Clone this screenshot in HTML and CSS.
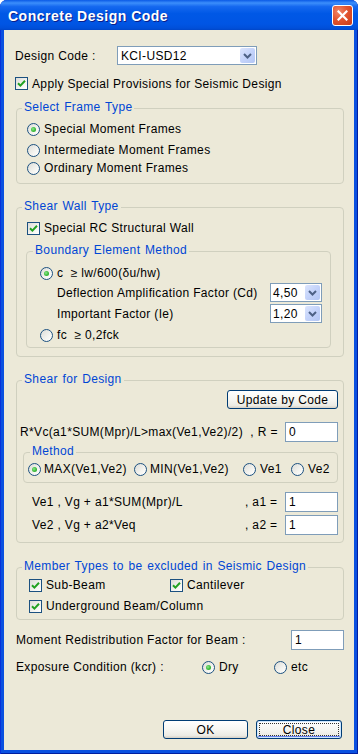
FILE: index.html
```html
<!DOCTYPE html>
<html lang="en">
<head>
    <meta charset="UTF-8">
    <meta name="viewport" content="width=device-width, initial-scale=1.0">
    <title>Concrete Design Code</title>
    <link rel="stylesheet" href="styles.css">
</head>
<body>
<div class="window">
    <div class="titlebar">
        <span class="title">Concrete Design Code</span>
        <span class="x-btn">
            <svg viewBox="0 0 11 11" width="11" height="11"><path d="M1.5 1.5l8 8M9.5 1.5l-8 8" stroke="#fff" stroke-width="2.2" stroke-linecap="square"/></svg>
        </span>
    </div>

    <div class="client">
        <div class="code-row">
            <span class="code-label">Design Code :</span>
            <div class="combo code-combo">
                <span class="combo-text">KCI-USD12</span>
                <span class="drop"><svg viewBox="0 0 9 6" width="9" height="6"><path d="M1 1l3.5 3.5L8 1" fill="none" stroke="#4d6185" stroke-width="2"/></svg></span>
            </div>
        </div>

        <div class="opt apply-row">
            <span class="cb"><svg viewBox="0 0 9 9" width="9" height="9"><path d="M1 4.2l2.4 2.4L8 1.8" fill="none" stroke="#21a121" stroke-width="2"/></svg></span>
            <span>Apply Special Provisions for Seismic Design</span>
        </div>

        <fieldset class="grp frame-grp">
            <legend>Select Frame Type</legend>
            <div class="opt"><span class="rb on"></span><span>Special Moment Frames</span></div>
            <div class="opt frame-2"><span class="rb"></span><span>Intermediate Moment Frames</span></div>
            <div class="opt frame-3"><span class="rb"></span><span>Ordinary Moment Frames</span></div>
        </fieldset>

        <fieldset class="grp wall-grp">
            <legend>Shear Wall Type</legend>
            <div class="opt">
                <span class="cb"><svg viewBox="0 0 9 9" width="9" height="9"><path d="M1 4.2l2.4 2.4L8 1.8" fill="none" stroke="#21a121" stroke-width="2"/></svg></span>
                <span>Special RC Structural Wall</span>
            </div>
            <fieldset class="grp bound-grp">
                <legend>Boundary Element Method</legend>
                <div class="opt"><span class="rb on"></span><span>c &nbsp;≥ lw/600(δu/hw)</span></div>
                <div class="factor-row">
                    <span>Deflection Amplification Factor (Cd)</span>
                    <div class="combo small-combo">
                        <span class="combo-text">4,50</span>
                        <span class="drop"><svg viewBox="0 0 9 6" width="9" height="6"><path d="M1 1l3.5 3.5L8 1" fill="none" stroke="#4d6185" stroke-width="2"/></svg></span>
                    </div>
                </div>
                <div class="factor-row">
                    <span>Important Factor (Ie)</span>
                    <div class="combo small-combo">
                        <span class="combo-text">1,20</span>
                        <span class="drop"><svg viewBox="0 0 9 6" width="9" height="6"><path d="M1 1l3.5 3.5L8 1" fill="none" stroke="#4d6185" stroke-width="2"/></svg></span>
                    </div>
                </div>
                <div class="opt fc-row"><span class="rb"></span><span>fc &nbsp;≥ 0,2fck</span></div>
            </fieldset>
        </fieldset>

        <fieldset class="grp shear-grp">
            <legend>Shear for Design</legend>
            <div class="update-row"><span class="btn update-btn">Update by Code</span></div>
            <div class="field-row r-row">
                <span>R*Vc(a1*SUM(Mpr)/L&gt;max(Ve1,Ve2)/2) &nbsp;, R =</span>
                <span class="edit">0</span>
            </div>
            <fieldset class="grp method-grp">
                <legend>Method</legend>
                <div class="method-row">
                    <div class="opt m-max"><span class="rb on"></span><span>MAX(Ve1,Ve2)</span></div>
                    <div class="opt m-min"><span class="rb"></span><span>MIN(Ve1,Ve2)</span></div>
                    <div class="opt m-ve1"><span class="rb"></span><span>Ve1</span></div>
                    <div class="opt"><span class="rb"></span><span>Ve2</span></div>
                </div>
            </fieldset>
            <div class="field-row ve-row">
                <span class="ve-text">Ve1 , Vg + a1*SUM(Mpr)/L</span>
                <span class="ve-eq">, a1 =</span>
                <span class="edit">1</span>
            </div>
            <div class="field-row ve-row ve-2">
                <span class="ve-text">Ve2 , Vg + a2*Veq</span>
                <span class="ve-eq">, a2 =</span>
                <span class="edit">1</span>
            </div>
        </fieldset>

        <fieldset class="grp member-grp">
            <legend>Member Types to be excluded in Seismic Design</legend>
            <div class="member-row">
                <div class="opt sub-beam">
                    <span class="cb"><svg viewBox="0 0 9 9" width="9" height="9"><path d="M1 4.2l2.4 2.4L8 1.8" fill="none" stroke="#21a121" stroke-width="2"/></svg></span>
                    <span>Sub-Beam</span>
                </div>
                <div class="opt">
                    <span class="cb"><svg viewBox="0 0 9 9" width="9" height="9"><path d="M1 4.2l2.4 2.4L8 1.8" fill="none" stroke="#21a121" stroke-width="2"/></svg></span>
                    <span>Cantilever</span>
                </div>
            </div>
            <div class="opt member-2">
                <span class="cb"><svg viewBox="0 0 9 9" width="9" height="9"><path d="M1 4.2l2.4 2.4L8 1.8" fill="none" stroke="#21a121" stroke-width="2"/></svg></span>
                <span>Underground Beam/Column</span>
            </div>
        </fieldset>

        <div class="field-row moment-row">
            <span>Moment Redistribution Factor for Beam :</span>
            <span class="edit">1</span>
        </div>

        <div class="exposure-row">
            <span class="exp-label">Exposure Condition (kcr) :</span>
            <div class="opt exp-dry"><span class="rb on"></span><span>Dry</span></div>
            <div class="opt"><span class="rb"></span><span>etc</span></div>
        </div>

        <div class="button-row">
            <span class="btn">OK</span>
            <span class="btn default-btn"><span class="focus">Close</span></span>
        </div>
    </div>
</div>
</body>
</html>
```

FILE: styles.css
```css
body {
    margin: 0;
    padding: 0;
    background: #ffffff;
    font-family: "Liberation Sans", Arial, sans-serif;
    font-size: 12px;
    letter-spacing: 0.35px;
    color: #000;
}
.window {
    width: 358px;
    height: 754px;
    box-sizing: border-box;
    display: flex;
    flex-direction: column;
    background: #0a50e0;
    border-radius: 7px 7px 0 0;
    box-shadow: inset 1px 0 #0831d9, inset -1px 0 #001ea0, inset 0 -1px #001ea0;
    overflow: hidden;
}
.titlebar {
    height: 30px;
    flex: none;
    display: flex;
    align-items: center;
    padding: 0 5px 0 8px;
    background: linear-gradient(to bottom, #0a5ae6 0%, #3c8efb 10%, #1568ef 22%, #0058e6 45%, #0055e4 80%, #004fd9 94%, #0046c8 100%);
}
.title {
    flex: 1;
    color: #fff;
    font-weight: bold;
    font-size: 14px;
    letter-spacing: 0.5px;
    text-shadow: 1px 1px #0a1e8a;
    padding-top: 1px;
}
.x-btn {
    width: 21px;
    height: 21px;
    box-sizing: border-box;
    border: 1px solid #fff;
    border-radius: 3px;
    display: flex;
    align-items: center;
    justify-content: center;
    background: radial-gradient(circle at 30% 30%, #f0876a 0%, #e2542f 45%, #c93b18 100%);
}
.client {
    flex: 1;
    margin: 0 4px 4px;
    background: #ece9d8;
    padding: 16px 10px 0 11px;
    display: flex;
    flex-direction: column;
}

/* controls */
.opt {
    display: flex;
    align-items: center;
    height: 16px;
    gap: 4px;
    white-space: nowrap;
}
.cb {
    width: 13px;
    height: 13px;
    box-sizing: border-box;
    flex: none;
    border: 1px solid #1c5180;
    background: linear-gradient(135deg, #dcdcd7 0%, #f4f4f0 60%, #ffffff 100%);
    display: flex;
    align-items: center;
    justify-content: center;
}
.rb {
    width: 13px;
    height: 13px;
    box-sizing: border-box;
    flex: none;
    border: 1px solid #1c5180;
    border-radius: 50%;
    background: linear-gradient(135deg, #dcdcd7 0%, #f4f4f0 60%, #ffffff 100%);
    display: flex;
    align-items: center;
    justify-content: center;
}
.rb.on::after {
    content: "";
    width: 5px;
    height: 5px;
    border-radius: 50%;
    background: radial-gradient(circle at 40% 40%, #8ee68e 0%, #3fbf3f 50%, #1d9a1d 100%);
}
.combo {
    box-sizing: border-box;
    height: 19px;
    border: 1px solid #7f9db9;
    background: #fff;
    display: flex;
    align-items: center;
}
.combo-text {
    flex: 1;
    padding-left: 2px;
}
.drop {
    width: 15px;
    height: 15px;
    margin-right: 1px;
    border-radius: 2px;
    background: linear-gradient(135deg, #dce5fd 0%, #c4d3fa 50%, #b3c6f4 100%);
    display: flex;
    align-items: center;
    justify-content: center;
}
.edit {
    box-sizing: border-box;
    width: 53px;
    height: 20px;
    flex: none;
    border: 1px solid #7f9db9;
    background: #fff;
    padding-left: 3px;
    line-height: 18px;
}
.btn {
    box-sizing: border-box;
    display: flex;
    align-items: center;
    justify-content: center;
    height: 19px;
    border: 1px solid #003c74;
    border-radius: 3px;
    background: linear-gradient(to bottom, #ffffff 0%, #f6f6f2 50%, #ecebe4 85%, #d6d0c5 100%);
}

/* group boxes */
.grp {
    margin: 0 0 0 1px;
    padding: 0 10px 7px 10px;
    border: 1px solid #d0d0bf;
    border-radius: 4px;
    min-width: 0;
}
.grp legend {
    color: #0046d5;
    line-height: 14px;
    padding: 0 2px 3px;
    margin-left: -5px;
    word-spacing: 1px;
}

/* top rows */
.code-row {
    display: flex;
    align-items: center;
    height: 19px;
}
.code-label {
    width: 102px;
}
.code-combo {
    width: 140px;
    padding-left: 1px;
}
.apply-row {
    margin-top: 12px;
    height: 13px;
}

.frame-grp {
    margin-top: 10px;
    padding-top: 4px;
}
.frame-2 {
    margin-top: 5px;
}
.frame-3 {
    margin-top: 2px;
}

.wall-grp {
    margin-top: 15px;
    padding-top: 4px;
    padding-bottom: 8px;
}
.bound-grp {
    margin: 7px 2px 0 -1px;
    padding: 5px 8px 4px 13px;
}
.bound-grp legend {
    margin-left: -7px;
}
.factor-row {
    display: flex;
    align-items: center;
    justify-content: space-between;
    height: 19px;
    margin-top: 2px;
    padding-left: 17px;
}
.small-combo {
    width: 52px;
}
.fc-row {
    margin-top: 4px;
}

.shear-grp {
    margin-top: 15px;
    padding: 1px 5px 7px 3px;
}
.shear-grp > legend {
    margin-left: 2px;
}
.update-row {
    display: flex;
    justify-content: flex-end;
}
.update-btn {
    width: 111px;
}
.field-row {
    display: flex;
    align-items: center;
    justify-content: space-between;
    height: 20px;
    white-space: nowrap;
}
.r-row {
    margin-top: 13px;
}
.method-grp {
    margin: 2px 0 0 3px;
    padding: 0 0 5px 4px;
}
.method-grp legend {
    margin-left: 2px;
}
.method-row {
    display: flex;
    height: 16px;
}
.m-max {
    width: 106px;
    gap: 3px;
}
.m-min {
    width: 109px;
    gap: 3px;
}
.m-ve1 {
    width: 48px;
}
.ve-row {
    margin-top: 9px;
    padding-left: 12px;
}
.ve-2 {
    margin-top: 3px;
}
.ve-text {
    flex: 1;
}
.ve-eq {
    width: 40px;
}

.member-grp {
    margin-top: 16px;
    padding: 1px 10px 5px 12px;
}
.member-grp legend {
    margin-left: -7px;
}
.member-row {
    display: flex;
}
.sub-beam {
    width: 141px;
}
.member-2 {
    margin-top: 5px;
}

.moment-row {
    margin-top: 10px;
    padding-left: 1px;
}
.exposure-row {
    display: flex;
    align-items: center;
    height: 16px;
    margin-top: 9px;
    padding-left: 1px;
}
.exp-label {
    width: 186px;
}
.exp-dry {
    width: 72px;
}

.button-row {
    display: flex;
    justify-content: flex-end;
    gap: 8px;
    margin-top: 45px;
    padding-right: 2px;
}
.button-row .btn {
    width: 85px;
}
.button-row .default-btn {
    width: 86px;
    box-shadow: inset 0 0 0 1px #cee7ff, inset 0 -1px 0 1px #6982ee;
    padding: 2px;
}
.focus {
    flex: 1;
    align-self: stretch;
    display: flex;
    align-items: center;
    justify-content: center;
    border: 1px dotted #333;
}
```
